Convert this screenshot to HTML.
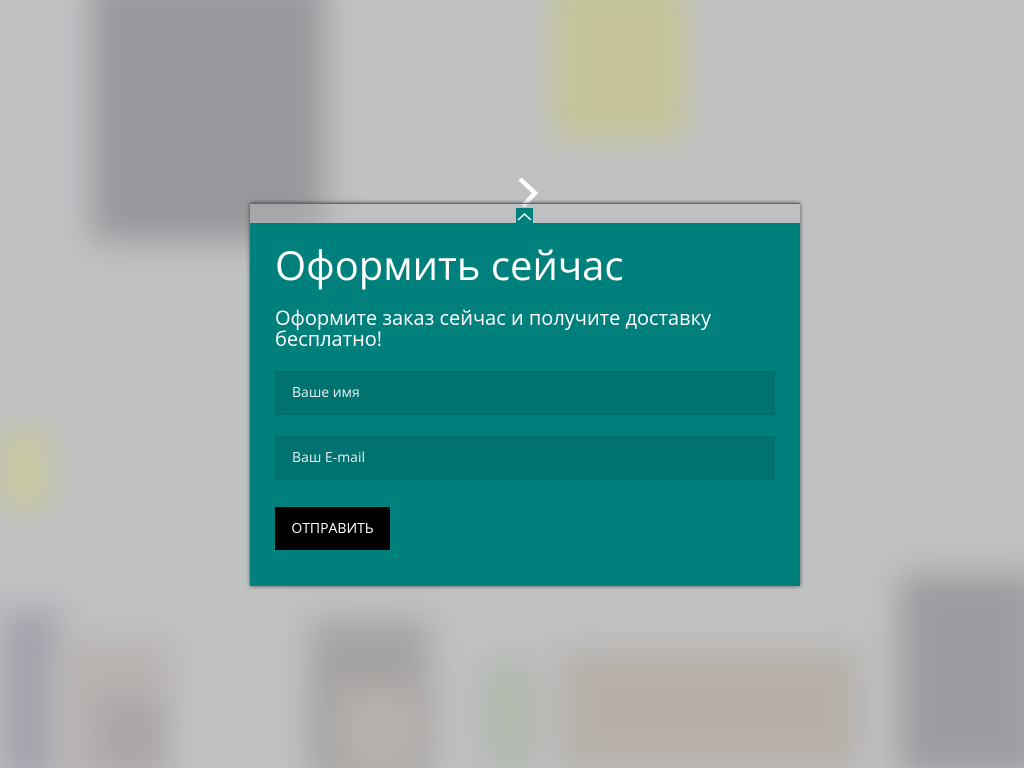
<!DOCTYPE html>
<html><head><meta charset="utf-8"><style>
html,body{margin:0;padding:0;width:1024px;height:768px;overflow:hidden;background:#c0c1c3;font-family:"Open Sans","Liberation Sans","DejaVu Sans",sans-serif}
.bg{position:absolute;inset:0;overflow:hidden}
.b{position:absolute;filter:blur(16px)}
.modal{position:absolute;left:250px;top:203px;width:550px;height:382px;box-shadow:0 0 4px rgba(0,0,0,.6);border-top:1px solid #666}
.hdr{position:absolute;left:0;top:0;width:550px;height:19px;background:rgba(190,191,193,.35)}
.body{position:absolute;left:0;top:19px;width:550px;height:363px;background:#00807d;color:#fff}
h1{position:absolute;left:25px;top:16px;margin:0;font-weight:normal;font-size:40px;line-height:52px;letter-spacing:0}
.sub{position:absolute;left:25px;top:84px;width:480px;font-size:20px;line-height:21px}
.inp{position:absolute;left:25px;width:498px;height:42px;background:#007370;border:1px solid #006c69;font-size:14px;line-height:42px;color:#e5f0ef}
.inp span{margin-left:16px}
.btn{position:absolute;left:25px;top:284px;width:115px;height:43px;background:#000;color:#fff;font-size:14px;line-height:43px;text-align:center}
</style></head><body>
<div class="bg">
<div class="b" style="left:92px;top:-20px;width:232px;height:260px;background:#98989c"></div>
<div class="b" style="left:552px;top:-20px;width:135px;height:160px;background:#c4c498"></div>
<div class="b" style="left:0;top:430px;width:50px;height:80px;background:#c8c89e"></div>
<div class="b" style="left:0;top:610px;width:60px;height:170px;background:#a4a3ac"></div>
<div class="b" style="left:60px;top:640px;width:110px;height:140px;background:#b8b2b0"></div>
<div class="b" style="left:100px;top:700px;width:60px;height:70px;background:#a8a4a8"></div>
<div class="b" style="left:310px;top:620px;width:120px;height:160px;background:#a5a3a2"></div>
<div class="b" style="left:340px;top:690px;width:80px;height:80px;background:#b8b2ae"></div>
<div class="b" style="left:480px;top:660px;width:60px;height:110px;background:#b2b8ae"></div>
<div class="b" style="left:560px;top:650px;width:300px;height:120px;background:#b5afa8"></div>
<div class="b" style="left:900px;top:575px;width:140px;height:200px;background:#9c9b9f"></div>
</div>
<svg style="position:absolute;left:515px;top:176px" width="28" height="32" viewBox="0 0 28 32"><path d="M5 3 L20 17 L8 30" fill="none" stroke="#fff" stroke-width="4.5"/></svg>
<div class="modal">
<div class="hdr"></div>
<div style="position:absolute;left:266px;top:4px;width:17px;height:16px;background:#00807d"></div>
<svg style="position:absolute;left:266px;top:4px" width="17" height="16"><path d="M2 12 L8.5 6 L15 12" fill="none" stroke="#fff" stroke-width="1.5"/></svg>
<div class="body">
<h1>Оформить сейчас</h1>
<div class="sub">Оформите заказ сейчас и получите доставку бесплатно!</div>
<div class="inp" style="top:148px"><span>Ваше имя</span></div>
<div class="inp" style="top:213px"><span>Ваш E-mail</span></div>
<div class="btn">ОТПРАВИТЬ</div>
</div>
</div>
</body></html>
